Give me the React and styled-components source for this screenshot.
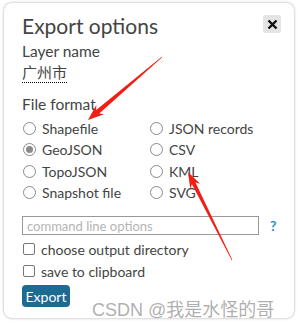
import styled, { createGlobalStyle } from "styled-components";

const Global = createGlobalStyle`
  body {
    margin: 0;
    background: #fff;
    font-family: Lato, "Noto Sans CJK SC", sans-serif;
  }
`;

const Page = styled.div`
  position: relative;
  width: 298px;
  height: 324px;
  overflow: hidden;
  padding: 3px 4px;
  box-sizing: border-box;
`;

const Card = styled.div`
  width: 290px;
  height: 315px;
  box-sizing: border-box;
  background: #fff;
  border-radius: 8px;
  box-shadow: 0 0 3px rgba(0, 0, 0, 0.35);
  padding: 10px 13px 0 18px;
  color: #444;
`;

const Header = styled.div`
  display: flex;
  justify-content: space-between;
  align-items: flex-start;
`;

const Title = styled.h1`
  margin: 0;
  font-size: 21px;
  font-weight: 400;
  line-height: 26px;
`;

const Close = styled.div`
  width: 18px;
  height: 18px;
  margin-top: 2px;
  border-radius: 3px;
  background: #e4e4e4;
  display: flex;
  align-items: center;
  justify-content: center;
`;

const Label = styled.div`
  font-size: 15.5px;
  line-height: 20px;
  margin-top: ${(p) => p.top || 0}px;
`;

const LayerName = styled.div`
  display: inline-block;
  font-size: 15px;
  line-height: 20px;
  margin-top: 1px;
  border-bottom: 1px dotted #000;
  font-family: "Noto Sans CJK SC", sans-serif;
`;

const Formats = styled.div`
  display: grid;
  grid-template-columns: 127px 1fr;
  grid-auto-rows: 21.3px;
  margin-top: 4px;
`;

const Option = styled.label`
  display: flex;
  align-items: center;
  gap: 6px;
  font-size: 14px;
  padding-left: 1px;
`;

const Radio = styled.span`
  width: 11px;
  height: 11px;
  border-radius: 50%;
  border: 1px solid #8a8a8a;
  display: flex;
  align-items: center;
  justify-content: center;
  flex: none;
  &::after {
    content: "";
    width: 7px;
    height: 7px;
    border-radius: 50%;
    background: ${(p) => (p.checked ? "#8a8a8a" : "transparent")};
  }
`;

const InputRow = styled.div`
  display: flex;
  align-items: center;
  margin-top: 13px;
`;

const TextInput = styled.input`
  width: 237px;
  height: 19px;
  box-sizing: border-box;
  border: 1px solid #999;
  padding: 0 4px;
  font-family: Lato, sans-serif;
  font-size: 13px;
  outline: none;
  &::placeholder {
    color: #b4b4b4;
  }
`;

const Help = styled.span`
  margin-left: 11px;
  color: #2b8fd0;
  font-weight: 700;
  font-size: 14px;
`;

const Check = styled.label`
  display: flex;
  align-items: center;
  gap: 6px;
  font-size: 14px;
  height: 22px;
  padding-left: 1px;
  margin-top: ${(p) => p.top || 0}px;
`;

const Box = styled.span`
  width: 10px;
  height: 10px;
  border: 1px solid #777;
  border-radius: 2px;
  flex: none;
`;

const Button = styled.button`
  margin-top: 3px;
  height: 22px;
  width: 48px;
  border: none;
  border-radius: 4px;
  background: #1d6a93;
  color: #fff;
  font-family: Lato, sans-serif;
  font-size: 14px;
  padding: 0;
`;

const Watermark = styled.div`
  position: absolute;
  left: 92px;
  top: 295px;
  font-family: "Liberation Sans", "Noto Sans CJK SC", sans-serif;
  font-size: 18px;
  color: rgba(120, 120, 120, 0.6);
  white-space: nowrap;
`;

const Overlay = styled.svg`
  position: absolute;
  left: 0;
  top: 0;
  pointer-events: none;
`;

function arrowPoints(tail, tip, headLen, headHalf, shaft) {
  const dx = tip[0] - tail[0];
  const dy = tip[1] - tail[1];
  const len = Math.hypot(dx, dy);
  const u = [dx / len, dy / len];
  const n = [-u[1], u[0]];
  const b = [tip[0] - u[0] * headLen, tip[1] - u[1] * headLen];
  const nb = [tip[0] - u[0] * headLen * 0.8, tip[1] - u[1] * headLen * 0.8];
  const pts = [
    [tail[0] + n[0] * 0.3, tail[1] + n[1] * 0.3],
    [nb[0] + n[0] * shaft, nb[1] + n[1] * shaft],
    [b[0] + n[0] * headHalf, b[1] + n[1] * headHalf],
    tip,
    [b[0] - n[0] * headHalf, b[1] - n[1] * headHalf],
    [nb[0] - n[0] * shaft, nb[1] - n[1] * shaft],
    [tail[0] - n[0] * 0.3, tail[1] - n[1] * 0.3],
  ];
  return pts.map((p) => p.join(",")).join(" ");
}

const formats = [
  ["Shapefile", "JSON records"],
  ["GeoJSON", "CSV"],
  ["TopoJSON", "KML"],
  ["Snapshot file", "SVG"],
];

export default function App() {
  return (
    <>
      <Global />
      <Page>
        <Card>
          <Header>
            <Title>Export options</Title>
            <Close>
              <svg width="11" height="11" viewBox="0 0 11 11">
                <path d="M1.5 1.5 L9.5 9.5 M9.5 1.5 L1.5 9.5" stroke="#111" strokeWidth="2.4" />
              </svg>
            </Close>
          </Header>
          <Label top={2}>Layer name</Label>
          <LayerName>广州市</LayerName>
          <Label top={11}>File format</Label>
          <Formats>
            {formats.flat().map((name) => (
              <Option key={name}>
                <Radio checked={name === "GeoJSON"} />
                {name}
              </Option>
            ))}
          </Formats>
          <InputRow>
            <TextInput placeholder="command line options" />
            <Help>?</Help>
          </InputRow>
          <Check top={3}>
            <Box />
            choose output directory
          </Check>
          <Check>
            <Box />
            save to clipboard
          </Check>
          <Button>Export</Button>
        </Card>
        <Watermark>CSDN @我是水怪的哥</Watermark>
        <Overlay width="298" height="324">
          <polygon fill="#f21d14" points={arrowPoints([162, 57], [88, 120], 16, 6, 2.4)} />
          <polygon fill="#f21d14" points={arrowPoints([232, 260], [188, 172], 16, 5.5, 2)} />
        </Overlay>
      </Page>
    </>
  );
}
